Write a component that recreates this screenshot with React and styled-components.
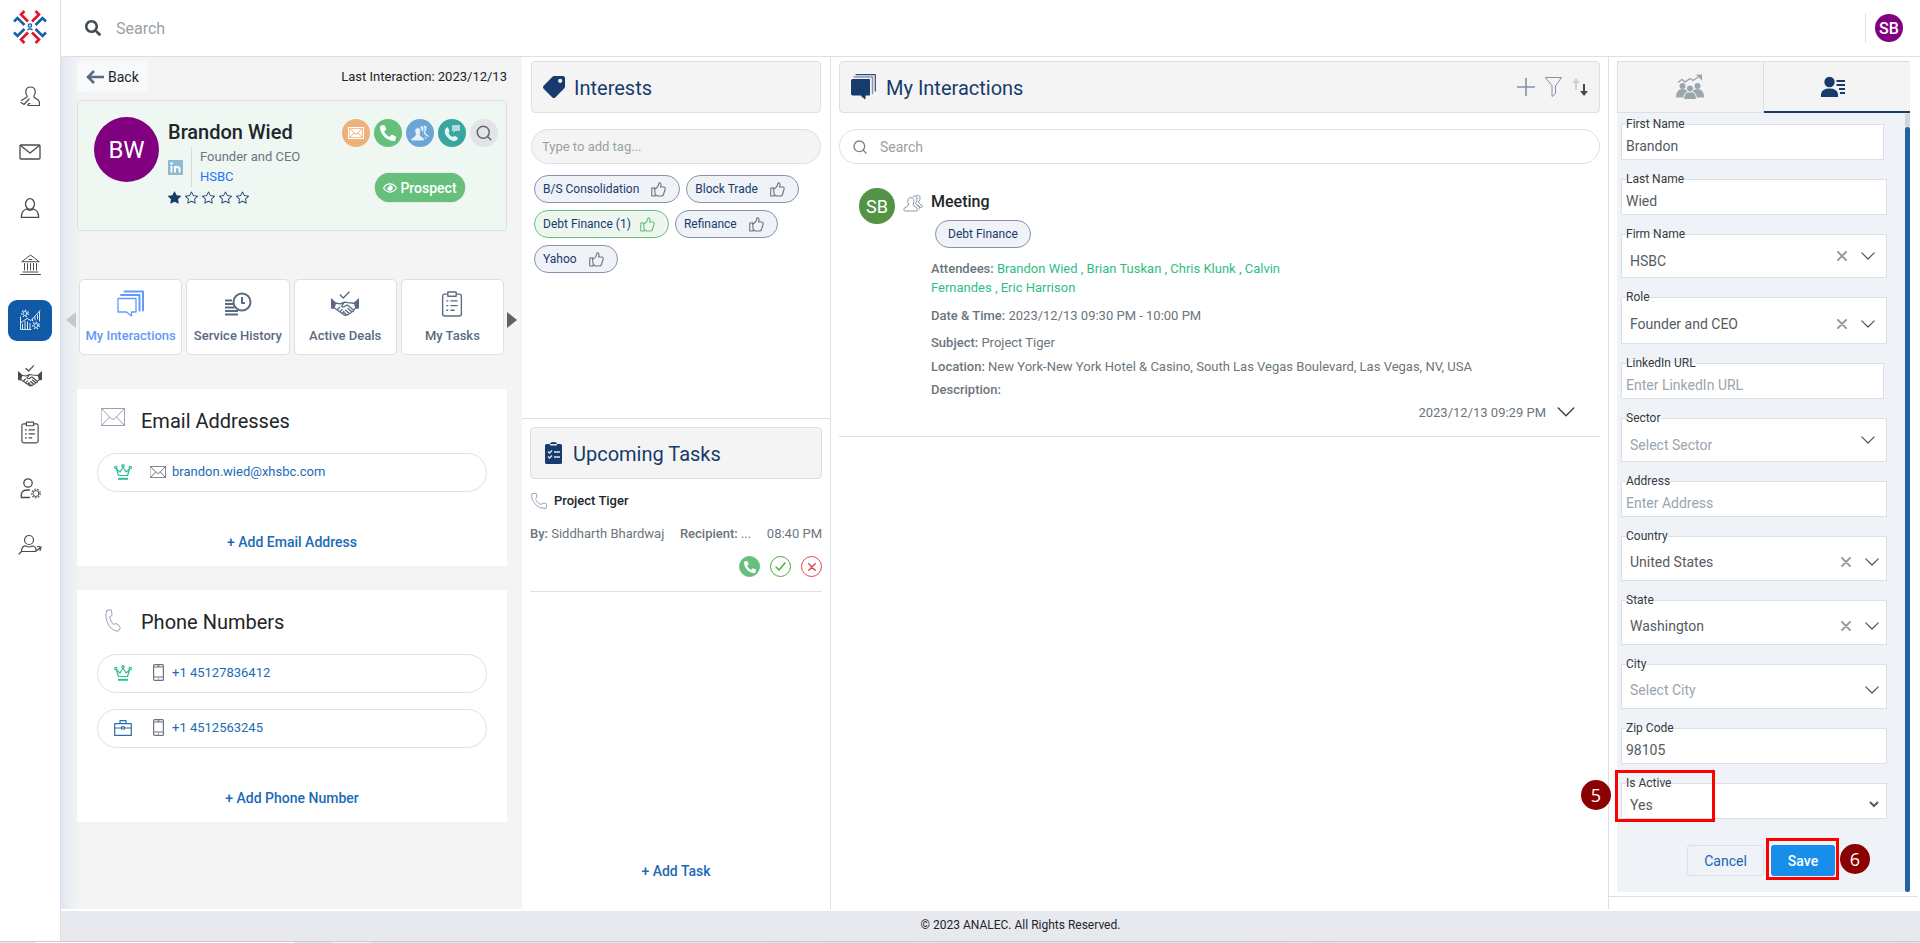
import React from 'react';
import styled, { createGlobalStyle, css } from 'styled-components';
import { FaSearch, FaTag, FaPhoneAlt, FaRegEye } from 'react-icons/fa';
import { BsStar, BsStarFill } from 'react-icons/bs';
import { Search, Phone } from 'lucide-react';

const c = {
  navy: '#173b6c',
  link: '#1b6bb5',
  line: '#dcdfe4',
  panel: '#f4f4f4',
  text: '#212529',
  muted: '#6c757d',
  slate: '#5a6b80',
  green: '#66bf7b',
  purple: '#800080',
  placeholder: '#999fa6',
};

const GlobalStyle = createGlobalStyle`
  * { box-sizing: border-box; }
  body { margin: 0; background: #fff; color: ${c.text}; font-family: Roboto, "Liberation Sans", sans-serif; font-size: 13px; }
  button, input, select { font: inherit; color: inherit; }
  button { cursor: pointer; background: none; border: 0; padding: 0; }
  a { text-decoration: none; color: inherit; }
  h1, h2, h3, p, ul, dl, dd { margin: 0; padding: 0; }
  ul { list-style: none; }
  svg { display: block; flex: none; }
`;

/* ---------- icons ---------- */
const Line = ({ size = 20, w, h, box = '0 0 20 20', sw = 1, children, ...rest }) => (
  <svg width={w || size} height={h || size} viewBox={box} fill="none" stroke="currentColor" strokeWidth={sw}
    strokeLinecap="round" strokeLinejoin="round" aria-hidden="true" {...rest}>{children}</svg>
);

const Logo = () => (
  <svg width="34" height="34" viewBox="0 0 34 34" fill="none" strokeWidth="2.600" strokeLinejoin="miter" aria-label="Analec">
    <g stroke="#e3132c">
      <path d="M11.5 1L8 4.5L15 11.5M22.5 1L26 4.5L19 11.5M11.5 33L8 29.5L15 22.500M22.500 33L26 29.500L19 22.500" />
    </g>
    <g stroke="#1660ac">
      <path d="M1 11.500L4.500 8L11.500 15M33 11.500L29.500 8L22.500 15M1 22.500L4.500 26L11.500 19M33 22.500L29.500 26L22.500 19" />
      <circle cx="17" cy="15.500" r="1.600" strokeWidth="1.400" />
      <path d="M14.500 20Q17 17.500 19.500 20" strokeWidth="1.400" />
    </g>
  </svg>
);
const PersonCheck = () => (
  <Line sw={1.2}><path d="M7 9.500C5 7 5 1 10.500 1S16 7 14 9.500V11.500C17 13 19.500 13.500 19.500 17V19.500H9C6.500 19.500 8 17.500 10 17.500M7 9.500V11L1.500 14.500M9 13L4 18.500L1 16.500" /></Line>
);
const Mail = ({ w = 22, h = 16, sw = 1.3 }) => (
  <Line w={w} h={h} box="0 0 22 16" sw={sw}><rect x="1" y="1" width="20" height="14" rx="1" /><path d="M1.500 1.500L11 9L20.500 1.500" /></Line>
);
const Envelope = ({ w = 24, h = 18, sw = 1 }) => (
  <Line w={w} h={h} box="0 0 24 18" sw={sw}><path d="M.5 .5H23.500V17.500H.5ZM.5 .5L10 10.500Q12 12 14 10.500L23.500 .5M.5 17.500L8.500 9M23.500 17.500L15.500 9" /></Line>
);
const Person = () => (
  <Line sw={1.300}><ellipse cx="10" cy="6" rx="4.500" ry="5.300" /><path d="M6.500 11Q1.500 12.500 1.300 19.300H18.700Q18.500 12.500 13.500 11Q10 13.500 6.500 11" /></Line>
);
const Bank = () => (
  <Line size={21} box="0 0 21 21"><path d="M2 7.500L10.500 1L19 7.500ZM4.500 9.500V16M7.500 9.500V16M10.500 9.500V16M13.500 9.500V16M16.500 9.500V16M3 18H18M.5 20.500H20.500M9 5.500H12" /></Line>
);
const Gear = ({ x, y, r = 2.600 }) => (
  <g><circle cx={x} cy={y} r={r} strokeWidth="1" /><circle cx={x} cy={y} r={r + 1.300} strokeDasharray="1.500 1.500" strokeWidth="1.200" strokeLinecap="butt" /></g>
);
const Analytics = () => (
  <Line size={22} box="0 0 22 22"><path d="M1.500 8V20.500H12M3.500 20V15M6 20V12.500M8.500 20V13M11 20V14.500M13.500 12V10M16 11V8M18.500 10V6M20.500 12V3M1.500 14L8 9.500L12 11.500L21 1.500" /><Gear x={6} y={4.500} r={2} /><Gear x={17} y={16.500} r={2} /></Line>
);
const Deal = ({ size = 24 }) => (
  <Line w={size} h={size * 22 / 24} box="0 0 24 22" sw={1.100}>
    <path d="M8 3.500L10.500 6L15.500 .8" strokeWidth="1.200" />
    <path d="M0 6L4.500 10L3 15.500L0 15Z" fill="currentColor" stroke="none" />
    <path d="M24 6L19.500 10L21 15.500L24 15Z" fill="currentColor" stroke="none" />
    <path d="M4.500 10.500L8 11L11.500 9.500L14.500 10L19.500 10.500M3.500 15L5 16L12 21L14 20.500M11.500 9.500L9 13Q10 14.500 12 13L14 12L19.500 16.500L20.500 15M19.500 16.500Q19.500 18 17.500 17.500L14.500 15M17.500 17.500Q17.500 19.500 15.500 19L12.500 16.500M15.500 19Q15 21 13 20L10.500 18M6 15.500L7.500 14M8 17.500L9.500 15.800M10 19L11 17.500" />
  </Line>
);
const Clipboard = ({ w = 20, h = 23 }) => (
  <Line w={w} h={h} box="0 0 20 25" sw={1.300}>
    <path d="M6 3H3Q1 3 1 5V22Q1 24 3 24H17Q19 24 19 22V5Q19 3 17 3H14M6 1H14V5H6ZM5 9.500H6M9 9.500H15M5 14H6M9 14H15M5 18.500H6M9 18.500H12" />
  </Line>
);
const PersonGear = () => (
  <Line size={21} box="0 0 21 21" sw={1.300}><circle cx="8" cy="5" r="4.200" /><path d="M9.500 19.500H1.200Q.5 12 7 12H9.500" /><Gear x={16} y={15.500} r={3} /></Line>
);
const PersonArrow = () => (
  <Line w={24} h={21} box="0 0 24 21" sw={1.200}><circle cx="11" cy="6" r="4.500" /><path d="M1 20L3.500 17.500H17.500L23 13M19.500 12.500L23 13L22 16.500M3.500 17Q4 11.500 8 12Q11 14 14 12Q18 12 18 16" /></Line>
);
const LinkedIn = () => (
  <svg width="15" height="15" viewBox="0 0 15 15" aria-hidden="true">
    <rect width="15" height="15" fill="#8dbbd6" />
    <circle cx="3.500" cy="3.500" r="1.200" fill="#fff" />
    <path d="M3.500 6V12.500M7 12.500V6M7 9Q7 7 9.300 7T11.600 9.500V12.500" stroke="#fff" strokeWidth="1.900" fill="none" />
  </svg>
);
const Handset = () => (
  <Line w={16} h={23} box="0 0 16 23"><path d="M2 1.500L6 .7Q7 3 7 6.500L4.500 8Q5.500 12.500 8.500 15.500L11 14.500Q14 16 15.300 18.500L13.500 22Q8 22.500 4 16.500Q-1 8 2 1.500Z" /></Line>
);
const Stack = () => (
  <Line size={27} box="0 0 27 27" sw={1.300}>
    <path d="M1 8.500H19V22H14.500V26L9.500 22H1Z" />
    <path d="M4 5H22.500V20.500M7.500 1.500H26V20.500" strokeWidth="2" />
  </Line>
);
const SolidStack = () => (
  <Line w={25} h={26} box="0 0 25 26">
    <path d="M1.500 5.500H18.500V21H14V25L9.500 21H1.500Q.5 21 .5 20V6.500Q.5 5.500 1.500 5.500Z" fill="currentColor" />
    <path d="M3 3H21.500V19.500" strokeWidth="1.500" opacity=".5" /><path d="M5 .6H24.300V17" strokeWidth="1.200" opacity=".9" />
  </Line>
);
const History = () => (
  <Line w={28} h={24} box="0 0 28 24" sw={2} strokeLinecap="butt"><circle cx="18" cy="10" r="8.500" /><path d="M18 5V11H21M1 8.500H8M1 12H9M1 15.500H10.500M1 19H14M1 22.500H14" /></Line>
);
const Crown = () => (
  <Line w={18} h={16} box="0 0 18 16" sw={1.200}><path d="M4.500 11.500L2.500 5L6 8L9 3L12 8L15.500 5L13.500 11.500Z" /><circle cx="1.800" cy="3.500" r="1.200" /><circle cx="9" cy="1.800" r="1.200" /><circle cx="16.200" cy="3.500" r="1.200" /><path d="M4 14.800H14" strokeWidth="2" strokeLinecap="butt" /></Line>
);
const Briefcase = () => (
  <Line w={18} h={16} box="0 0 18 16" sw={1.200}><path d="M.7 3.700H17.300V15.400H.7ZM6 3.500V.7H12V3.500M.7 8H7M11 8H17.300" /><rect x="7.500" y="6.800" width="3" height="2.200" /></Line>
);
const Mobile = () => (
  <Line w={11} h={17} box="0 0 11 17" sw={1.200}><rect x=".6" y=".6" width="9.800" height="15.800" rx="1" /><path d="M1 3H10M1 13H10M5 1.800H6M5.400 14.800H5.600" /></Line>
);
const Thumb = () => (
  <Line size={15} box="0 0 15 15" sw={1.100}><path d="M.8 6L3.500 5.800L4.300 14H1Q.6 14 .7 13ZM4.500 6.800Q7.500 5 8 1Q10.300 .3 10 3.500L9.600 5H13Q14.600 5.300 14 7.500L12.500 12.500Q12 14.200 10 14H6.500L5 13" /></Line>
);
const People = ({ filled }) => (
  <Line w={20} h={18} box="0 0 20 18" sw={1} fill={filled ? 'currentColor' : 'none'} stroke={filled ? '#6aa5d6' : 'currentColor'}>
    <path d="M13 2.500Q15.500 -.5 17 3Q17.500 6 15.500 8Q16 10 19 11.500Q20 13 18 13.500L14.500 11" />
    <path d="M10 2.500Q13 .5 14 4Q14.500 7 12.500 9.500Q13.500 11.500 16.500 13Q17.500 15 16 15.500" />
    <path d="M5.500 10.500Q3 4 8 3.500Q12.500 4 10 10.500Q10.500 12.500 13.500 13.500Q15 15 14 17H1.500Q.5 16.500 1 14.500Q5 13 5.500 10.500Z" />
  </Line>
);
const PhoneChat = () => (
  <svg width="20" height="20" viewBox="0 0 20 20" fill="currentColor" aria-hidden="true">
    <path d="M4 5Q5.500 3.500 6.500 5.500L7.500 8Q7.500 9 6.500 9.500Q7.500 13 11 14Q12 12.500 13 13L15.500 14.500Q16.500 15.500 15 17Q11 20 6 15Q.5 9.500 4 5Z" /><path d="M10 2H18V8H13.500L11.500 10V8H10Z" opacity=".7" />
  </svg>
);
const Chevron = ({ w = 14, h = 8, sw = 1.200 }) => (
  <Line w={w} h={h} box="0 0 14 8" sw={sw}><path d="M.8 .8L7 7L13.200 .8" /></Line>
);
const Cross = ({ size = 10, sw = 2 }) => (
  <Line size={size} box="0 0 10 10" sw={sw}><path d="M1 1L9 9M9 1L1 9" /></Line>
);
const Checklist = () => (
  <svg width="21" height="22" viewBox="-3 0 21 22" aria-hidden="true">
    <path d="M1.500 2H5Q5 0 8.500 0T12 2H15.500Q17 2 17 3.500V20.500Q17 22 15.500 22H1.500Q0 22 0 20.500V3.500Q0 2 1.500 2Z" fill="currentColor" />
    <path d="M5 2.700H12M3 9.500L4.500 11L7 8.500M9 10H15M3 14.500L4.500 16L7 13.500M9 15H15" stroke="#dfe6ef" strokeWidth="1.400" fill="none" />
  </svg>
);
const Sort = () => (
  <svg width="16" height="20" viewBox="0 0 16 20" aria-hidden="true">
    <path d="M4 1L8 6H5V13H3V6H0Z" fill="#cdd1d3" /><path d="M12 19L8 14H11V7H13V14H16Z" fill="#454a52" />
  </svg>
);
const Groups = () => (
  <svg width="28" height="26" viewBox="0 0 28 26" fill="currentColor" aria-hidden="true">
    <path d="M2 8.500L6 5.500L9 8L14 4.500L17 6.500L23 2.500" stroke="currentColor" strokeWidth="1.400" fill="none" /><path d="M20 .5H26V6.500Z" />
    <circle cx="6.500" cy="12" r="3" /><circle cx="21.500" cy="12" r="3" /><path d="M0 23.500Q0 15 6.500 15T13 23.500ZM28 23.500Q28 15 21.500 15T15 23.500Z" />
    <g stroke="#f4f4f4" strokeWidth="1"><path d="M7.500 25.500Q7.500 17.500 14 17.500T20.500 25.500Z" /><circle cx="14" cy="14.500" r="3.600" /></g>
  </svg>
);
const ContactLines = () => (
  <svg width="24" height="22" viewBox="0 0 24 22" fill="currentColor" aria-hidden="true">
    <circle cx="8.500" cy="6" r="5.200" /><path d="M0 21V18Q1 12.500 8.500 12.500T17 18V21ZM15.500 4H24V6H15.500ZM15.500 8H24V10H15.500ZM18 12H24V14H18ZM19 16H24V18H19Z" />
  </svg>
);
const Triangle = ({ left }) => (
  <svg width="10" height="16" viewBox="0 0 10 16" fill="currentColor" aria-hidden="true"><path d={left ? 'M10 0V16L0 8Z' : 'M0 0V16L10 8Z'} /></svg>
);

/* ---------- page frame ---------- */
const Page = styled.div`
  display: grid; grid-template-columns: 61px minmax(0, 1fr); grid-template-rows: 1fr auto; min-height: 100vh;
`;
const Sidebar = styled.nav`
  display: flex; flex-direction: column; align-items: center; padding-top: 10px; color: #4b4b4b;
  border-right: 1px solid ${c.line};
`;
const NavList = styled.ul`
  display: grid; gap: 15px; margin-top: 32px; width: 100%; justify-items: center;
`;
const NavLink = styled.a`
  display: flex; width: 44px; height: 41px; padding-bottom: 1px; align-items: center; justify-content: center; border-radius: 9px;
  ${({ $active }) => $active && css`background: #115aa8; color: #dbe8f5;`}
`;
const Main = styled.div`
  display: flex; flex-direction: column; min-width: 0;
`;
const TopBar = styled.header`
  display: flex; align-items: center; height: 57px; padding: 0 17px 0 24px; border-bottom: 1px solid ${c.line};
`;
const TopSearch = styled.label`
  display: flex; flex: 1; align-items: center; gap: 15px; color: #444b53;
  input { flex: 1; border: 0; outline: 0; padding: 0; font-size: 16px; }
  input::placeholder { color: ${c.placeholder}; opacity: 1; }
`;
const Account = styled.div`
  display: flex; align-items: center; height: 30px; padding-left: 9px; border-left: 1px solid ${c.line};
`;
const Avatar = styled.span`
  display: flex; flex: none; align-items: center; justify-content: center; border-radius: 50%;
  width: ${({ $size }) => $size}px; height: ${({ $size }) => $size}px; font-size: ${({ $font }) => $font}px;
  font-weight: ${({ $weight }) => $weight || 400}; background: ${({ $bg }) => $bg || c.purple}; color: #fff;
`;
const Columns = styled.main`
  flex: 1; display: grid; grid-template-columns: minmax(0, 461fr) minmax(0, 309fr) minmax(0, 778fr) minmax(0, 311fr);
`;
const Footer = styled.footer`
  height: 30px; margin-top: 2px; padding: 0 0 2px 60px; display: flex; align-items: center; justify-content: center;
  background: #e8e9ee; font-size: 12px;
`;
const Strip = styled.div`
  grid-column: 1 / -1; height: 2px; border-top: 1px solid #c9ccd0;
  background: linear-gradient(90deg, #dfe6f0 0 36px, #fff 36px 294px, #cbeeee 294px 332px, #eef8f8 332px 370px, #cbeeee 370px, #dfe0ea 60%, #e9e2e4 85%, #dde3ea);
`;

/* ---------- contact column ---------- */
const ContactColumn = styled.section`
  background: linear-gradient(90deg, #e1e8f0 0, #ebedf2 8px, ${c.panel} 20px); padding-top: 4px;
`;
const Inset = styled.div`
  margin: 0 15px 0 16px;
`;
const BackRow = styled(Inset)`
  display: flex; align-items: center; justify-content: space-between; height: 31px;
`;
const BackButton = styled.button`
  display: flex; align-items: center; gap: 4px; height: 31px; padding: 0 9px; border-radius: 4px; background: #f8f9fa; font-size: 14px;
  svg { color: ${c.slate}; }
`;
const ProfileCard = styled(Inset)`
  display: flex; gap: 9px; margin-top: 8px; height: 131px; padding: 16px 8px 0 16px;
  border: 1px solid ${c.line}; border-radius: 4px; background: #eef7f2;
`;
const ProfileInfo = styled.div`
  flex: 1; min-width: 0; padding-top: 3px;
`;
const Name = styled.h1`
  font-size: 20px; font-weight: 500; line-height: 24px; white-space: nowrap;
`;
const RoleRow = styled.div`
  display: flex; align-items: center; gap: 8px; margin-top: 3px;
`;
const RoleText = styled.div`
  border-left: 1px solid #d3dbdb; padding-left: 8px; line-height: 20px; color: ${c.muted}; white-space: nowrap;
  a { display: block; color: #1f75fe; }
`;
const Stars = styled.div`
  display: flex; align-items: center; gap: 4px; height: 20px; color: ${c.navy};
`;
const ProfileSide = styled.div`
  display: flex; flex-direction: column; align-items: center; gap: 26px; padding-top: 2px;
`;
const Actions = styled.div`
  display: flex; gap: 4px;
`;
const RoundAction = styled.button`
  display: flex; align-items: center; justify-content: center; width: 28px; height: 28px; border-radius: 50%;
  background: ${({ $bg }) => $bg}; color: ${({ $fg }) => $fg || '#fff'};
`;
const MailTile = styled.span`
  padding: 1px; background: #fff; color: #efb17a;
`;
const Prospect = styled.button`
  display: flex; align-items: center; gap: 3px; height: 29px; padding: 0 8px; border-radius: 15px;
  background: ${c.green}; color: #fff; font-size: 14px; font-weight: 500; box-shadow: 0 0 1px #7d9886;
`;
const TabStrip = styled.div`
  display: flex; align-items: center; gap: 3px; margin-top: 48px; padding: 0 5px;
`;
const ArrowButton = styled.button`
  margin-top: 6px; color: ${({ $off }) => ($off ? '#c6c7c9' : '#5f6163')};
`;
const Tabs = styled.div`
  flex: 1; display: grid; grid-template-columns: repeat(4, minmax(0, 1fr)); gap: 4px;
`;
const TabCard = styled.button`
  display: grid; grid-template-rows: 47px 16px; align-content: start; justify-items: center; justify-content: center; align-items: center; height: 76px;
  border: 1px solid ${c.line}; border-radius: 5px; background: #fff;
  color: ${({ $active }) => ($active ? '#6499f8' : c.slate)}; font-weight: 500; white-space: nowrap;
`;
const InfoBlock = styled(Inset)`
  margin-top: ${({ $gap }) => $gap}px; padding: 16px 20px 12px; background: #fff;
  display: flex; flex-direction: column; gap: 16px;
`;
const InfoTitle = styled.h2`
  display: flex; align-items: center; gap: 16px; height: 32px; padding-left: 4px; font-size: 20px; font-weight: 400;
  span { display: flex; justify-content: center; width: 24px; height: 26px; align-items: flex-start; color: #98a1b3; }
`;
const InfoPill = styled.div`
  display: grid; grid-template-columns: 18px 28px 1fr; align-items: center; column-gap: 6px; height: 39px; padding: 0 16px 2px;
  border: 1px solid ${c.line}; border-radius: 20px; color: ${({ $tone }) => $tone};
  svg:nth-child(2) { justify-self: center; margin-left: 12px; color: ${c.muted}; }
  a { color: ${c.link}; }
`;
const AddButton = styled.button`
  align-self: center; height: 24px; color: ${c.link}; font-size: 14px; font-weight: 500;
  margin-top: ${({ $gap }) => $gap || 0}px;
`;

/* ---------- shared parts ---------- */
const PanelHeader = styled.header`
  display: flex; align-items: center; height: 52px; padding: 0 11px; border: 1px solid ${c.line}; border-radius: 4px;
  background: ${c.panel}; color: ${c.navy};
  h2 { margin-left: ${({ $gap }) => $gap}px; padding-top: 2px; font-size: 20px; font-weight: 400; }
`;
const Tag = styled.span`
  display: inline-flex; align-items: center; gap: ${({ $tight }) => ($tight ? 9 : 12)}px; height: 28px;
  padding: ${({ $plain }) => ($plain ? '0 12px' : '0 13px 0 8px')};
  border: 1px solid ${({ $green }) => ($green ? c.green : '#8791ab')}; border-radius: 14px;
  background: ${({ $green }) => ($green ? '#edf7f0' : '#eff2f6')}; color: ${c.navy}; font-size: 12px; white-space: nowrap;
  button { color: ${({ $green }) => ($green ? c.green : c.muted)}; }
`;

/* ---------- interests and tasks ---------- */
const SideColumn = styled.section`
  display: flex; flex-direction: column; border-right: 1px solid ${c.line};
`;
const Interests = styled.div`
  min-height: 362px; padding: 4px 9px; border-bottom: 1px solid ${c.line};
`;
const TagInput = styled.input`
  display: block; width: 100%; height: 35px; margin-top: 16px; padding: 0 10px; border: 1px solid ${c.line};
  border-radius: 18px; background: ${c.panel}; outline: 0;
  &::placeholder { color: ${c.placeholder}; opacity: 1; }
`;
const TagList = styled.ul`
  display: flex; flex-wrap: wrap; gap: 7px 6px; margin-top: 11px; padding: 0 3px;
  li { display: flex; }
`;
const Tasks = styled.div`
  flex: 1; display: flex; flex-direction: column; padding: 8px 8px 26px;
`;
const Task = styled.article`
  flex: none; margin: 5px 0 auto; padding-bottom: 8px; border-bottom: 1px solid ${c.line}; color: ${c.muted};
`;
const TaskLine = styled.div`
  display: flex; align-items: center; height: 33px; white-space: nowrap; gap: ${({ $gap }) => $gap || 0}px;
  justify-content: ${({ $justify }) => $justify || 'flex-start'};
  h3 { font-size: 13px; font-weight: 500; color: ${c.text}; }
  b { font-weight: 500; }
  svg { color: #98a1b3; }
  button svg { color: inherit; }
`;
const TaskAction = styled.button`
  display: flex; align-items: center; justify-content: center; width: 21px; height: 21px; border-radius: 50%;
  border: 1px solid ${({ $tone }) => $tone}; color: ${({ $tone, $fill }) => ($fill ? '#fff' : $tone)};
  background: ${({ $tone, $fill }) => ($fill ? $tone : '#fff')};
`;

/* ---------- interactions ---------- */
const Feed = styled.section`
  padding: 4px 8px 0; border-right: 1px solid ${c.line};
`;
const HeaderTools = styled.div`
  display: flex; align-items: center; gap: 10px; margin-left: auto; color: #8490a8;
`;
const FeedSearch = styled.label`
  display: flex; align-items: center; gap: 12px; height: 35px; margin-top: 16px; padding: 0 12px;
  border: 1px solid ${c.line}; border-radius: 18px; color: #7a8086;
  input { flex: 1; border: 0; outline: 0; padding: 0; font-size: 14px; }
  input::placeholder { color: ${c.placeholder}; opacity: 1; }
`;
const Entry = styled.article`
  display: grid; grid-template-columns: 36px 20px minmax(0, 1fr); column-gap: 8px; padding: 24px 20px 14px;
  border-bottom: 1px solid ${c.line}; color: ${c.muted};
`;
const EntryIcon = styled.span`
  padding-top: 6px; color: #8c96aa;
`;
const EntryBody = styled.div`
  padding-top: 2px;
  h3 { font-size: 16px; font-weight: 500; line-height: 24px; color: ${c.text}; margin-bottom: 6px; }
  ${Tag} { margin-left: 4px; }
`;
const Detail = styled.p`
  margin-top: ${({ $gap }) => $gap}px; line-height: 19px; max-width: ${({ $narrow }) => ($narrow ? '355px' : 'none')};
  b { font-weight: 500; }
  span { color: #2fbd85; }
`;
const EntryFoot = styled.div`
  grid-column: 1 / -1; display: flex; align-items: center; justify-content: flex-end; gap: 11px; height: 20px;
  margin-top: 3px; padding-right: 5px;
  button { color: #444; }
`;

/* ---------- edit form ---------- */
const FormColumn = styled.section`
  padding: 4px 2px 12px 0;
`;
const FormBox = styled.div`
  padding: 0 8px 4px; border-bottom: 1px solid ${c.line};
`;
const FormTabs = styled.div`
  display: grid; grid-template-columns: 1fr 1fr;
`;
const FormTab = styled.button`
  display: flex; align-items: center; justify-content: center; height: 52px; border: 1px solid ${c.line};
  background: ${c.panel}; color: #9ba6ad;
  ${({ $active }) => $active && css`
    padding-right: 8px; border-left: 0; border-right: 0; border-bottom: 2px solid ${c.navy}; color: ${c.navy};
  `}
`;
const Scroller = styled.div`
  display: flex; background: #eff3f7;
`;
const Track = styled.div`
  width: 5px; padding-top: 14px; border-radius: 3px; background: #ced6de;
  &::after { content: ''; display: block; height: 100%; border-radius: 3px; background: #2263a0; }
`;
const Form = styled.form`
  flex: 1; min-width: 0; display: flex; flex-direction: column; gap: 12px; padding: 4px 18px 16px 4px;
`;
const Field = styled.fieldset`
  min-width: 0; margin: 0 ${({ $inset }) => ($inset ? 3 : 0)}px 0 0;
  padding: 0 4px; border: 1px solid ${c.line}; background: #fff; color: #545b62; font-size: 14px;
  legend { padding: 0; font-size: 12px; line-height: 14px; color: #343a40; }
`;
const TextInput = styled.input`
  display: block; width: 100%; height: 28px; border: 0; outline: 0; padding: 2px 0 0; background: transparent;
  &::placeholder { color: #9aa5ad; opacity: 1; }
`;
const NativeSelect = styled.select`
  display: block; width: 100%; height: 28px; border: 0; outline: 0; padding: 2px 0 0; background: transparent;
`;
const PickerRow = styled.div`
  display: flex; height: ${({ $h }) => $h}px; align-items: center; gap: 14px; padding: 0 ${({ $wide }) => ($wide ? 7 : 3)}px 0 4px;
  select { flex: 1; min-width: 0; height: 100%; appearance: none; border: 0; outline: 0; padding: ${({ $raised }) => ($raised ? 4 : 0)}px 0 0; background: transparent;
    color: ${({ $empty }) => ($empty ? '#9aa5ad' : 'inherit')}; }
  button { color: #9d9d9d; }
  > svg, button { margin-bottom: ${({ $raised }) => ($raised ? 6 : 0)}px; }
  > svg { color: #555; }
`;
const FormButtons = styled.div`
  display: flex; justify-content: flex-end; gap: 7px; margin: 14px 52px 0 0;
`;
const FormButton = styled.button`
  height: 31px; border-radius: 3px; font-size: 14px; width: ${({ $w }) => $w}px;
  ${({ $primary }) => ($primary
    ? css`background: #168eea; color: #fff; font-weight: 500;`
    : css`border: 1px solid ${c.line}; color: #1b62b5;`)}
`;
const Marked = styled.div`
  position: relative;
`;
const Frame = styled.span`
  position: absolute; border: 3px solid #f00; pointer-events: none;
  inset: ${({ $inset }) => $inset}; width: ${({ $w }) => $w || 'auto'};
`;
const Step = styled.span`
  position: absolute; top: ${({ $top }) => $top}px; left: ${({ $left }) => $left}px; display: flex; align-items: center; justify-content: center;
  width: 30px; height: 30px; border-radius: 50%; background: #8b0000; color: #fff; font-family: "Open Sans", sans-serif; font-size: 18px;
`;

const navItems = [
  ['Clients', <PersonCheck />], ['Mail', <Mail />], ['Contacts', <Person />], ['Firms', <Bank />],
  ['Analytics', <Analytics />, true], ['Deals', <Deal />], ['Tasks', <Clipboard w={18} />],
  ['User settings', <PersonGear />], ['Referrals', <PersonArrow />],
];
const interests = [['B/S Consolidation'], ['Block Trade'], ['Debt Finance (1)', true], ['Refinance'], ['Yahoo']];

function InputField({ id, label, value, placeholder, inset }) {
  return (
    <Field $inset={inset}>
      <legend><label htmlFor={id}>{label}</label></legend>
      <TextInput id={id} defaultValue={value} placeholder={placeholder} />
    </Field>
  );
}

function PickerField({ id, label, value, placeholder, h = 37, raised, wide }) {
  return (
    <Field>
      <legend><label htmlFor={id}>{label}</label></legend>
      <PickerRow $h={h} $raised={raised} $wide={wide} $empty={!value}>
        <select id={id}><option>{value || placeholder}</option></select>
        {value && <button type="button" aria-label={`Clear ${label}`}><Cross /></button>}
        <Chevron />
      </PickerRow>
    </Field>
  );
}

export default function App() {
  return (
    <>
      <GlobalStyle />
      <Page>
        <Sidebar>
          <Logo />
          <NavList>
            {navItems.map(([label, icon, active]) => (
              <li key={label}><NavLink href="#" aria-label={label} $active={active}>{icon}</NavLink></li>
            ))}
          </NavList>
        </Sidebar>
        <Main>
          <TopBar>
            <TopSearch><FaSearch size={16} /><input placeholder="Search" aria-label="Search everything" /></TopSearch>
            <Account><Avatar $size={28} $font={16} $weight={500}>SB</Avatar></Account>
          </TopBar>
          <Columns>
            <ContactColumn>
              <BackRow>
                <BackButton type="button">
                  <Line w={18} h={14} box="0 0 18 14" sw={2.500} strokeLinecap="butt" strokeLinejoin="miter"><path d="M18 7H2M8 1L2 7L8 13" /></Line>
                  Back
                </BackButton>
                <span>Last Interaction: 2023/12/13</span>
              </BackRow>
              <ProfileCard>
                <Avatar $size={65} $font={24}>BW</Avatar>
                <ProfileInfo>
                  <Name>Brandon Wied</Name>
                  <RoleRow>
                    <LinkedIn />
                    <RoleText>Founder and CEO<a href="#">HSBC</a></RoleText>
                  </RoleRow>
                  <Stars>
                    <BsStarFill size={13} /><BsStar size={13} /><BsStar size={13} /><BsStar size={13} /><BsStar size={13} />
                  </Stars>
                </ProfileInfo>
                <ProfileSide>
                  <Actions>
                    <RoundAction type="button" aria-label="Email" $bg="#efb17a"><MailTile><Envelope w={14} h={10} sw={1.800} /></MailTile></RoundAction>
                    <RoundAction type="button" aria-label="Call" $bg={c.green}><FaPhoneAlt size={16} /></RoundAction>
                    <RoundAction type="button" aria-label="Meeting" $bg="#6aa5d6" $fg="#e6f0f9"><People filled /></RoundAction>
                    <RoundAction type="button" aria-label="Call note" $bg="#3aa5a0" $fg="#e2f5f3"><PhoneChat /></RoundAction>
                    <RoundAction type="button" aria-label="Find" $bg="#e2e4e9" $fg="#666"><Search size={18} strokeWidth={2} /></RoundAction>
                  </Actions>
                  <Prospect type="button"><FaRegEye size={14} />Prospect</Prospect>
                </ProfileSide>
              </ProfileCard>
              <TabStrip>
                <ArrowButton type="button" aria-label="Previous" $off><Triangle left /></ArrowButton>
                <Tabs>
                  <TabCard type="button" $active><Stack />My Interactions</TabCard>
                  <TabCard type="button"><History />Service History</TabCard>
                  <TabCard type="button"><Deal size={28} />Active Deals</TabCard>
                  <TabCard type="button"><Clipboard w={22} h={26} />My Tasks</TabCard>
                </Tabs>
                <ArrowButton type="button" aria-label="Next"><Triangle /></ArrowButton>
              </TabStrip>
              <InfoBlock $gap={34}>
                <InfoTitle><span><Envelope /></span>Email Addresses</InfoTitle>
                <InfoPill $tone="#2fbd95"><Crown /><Envelope w={16} h={12} sw={1.500} /><a href="#">brandon.wied@xhsbc.com</a></InfoPill>
                <AddButton type="button" $gap={22}>+ Add Email Address</AddButton>
              </InfoBlock>
              <InfoBlock $gap={24}>
                <InfoTitle><span><Handset /></span>Phone Numbers</InfoTitle>
                <InfoPill $tone="#2fbd95"><Crown /><Mobile /><a href="#">+1 45127836412</a></InfoPill>
                <InfoPill $tone="#2d6bab"><Briefcase /><Mobile /><a href="#">+1 4512563245</a></InfoPill>
                <AddButton type="button" $gap={22}>+ Add Phone Number</AddButton>
              </InfoBlock>
            </ContactColumn>

            <SideColumn>
              <Interests>
                <PanelHeader $gap={9}><FaTag size={22} style={{ transform: 'scaleX(-1)' }} /><h2>Interests</h2></PanelHeader>
                <TagInput placeholder="Type to add tag..." aria-label="Add tag" />
                <TagList>
                  {interests.map(([name, green]) => (
                    <li key={name}><Tag $green={green} $tight={green}>{name}<button type="button" aria-label={`Like ${name}`}><Thumb /></button></Tag></li>
                  ))}
                </TagList>
              </Interests>
              <Tasks>
                <PanelHeader $gap={10}><Checklist /><h2>Upcoming Tasks</h2></PanelHeader>
                <Task>
                  <TaskLine $gap={6}><Phone size={18} strokeWidth={1.300} /><h3>Project Tiger</h3></TaskLine>
                  <TaskLine $justify="space-between"><span><b>By:</b> Siddharth Bhardwaj</span><span><b>Recipient:</b> ...</span><span>08:40 PM</span></TaskLine>
                  <TaskLine $justify="flex-end" $gap={10}>
                    <TaskAction type="button" aria-label="Call" $tone={c.green} $fill><FaPhoneAlt size={12} /></TaskAction>
                    <TaskAction type="button" aria-label="Complete" $tone="#45ac34"><Line w={11} h={9} box="0 0 11 9" sw={1.400}><path d="M1 5L4 8L10 1" /></Line></TaskAction>
                    <TaskAction type="button" aria-label="Dismiss" $tone="#dc4450"><Cross size={8} sw={1.800} /></TaskAction>
                  </TaskLine>
                </Task>
                <AddButton type="button">+ Add Task</AddButton>
              </Tasks>
            </SideColumn>

            <Feed>
              <PanelHeader $gap={10}>
                <SolidStack /><h2>My Interactions</h2>
                <HeaderTools>
                  <button type="button" aria-label="Add"><Line size={18} box="0 0 18 18" sw={1.600} strokeLinecap="butt"><path d="M9 0V18M0 9H18" /></Line></button>
                  <button type="button" aria-label="Filter"><Line w={17} h={20} box="0 0 17 20"><path d="M.5 .5H16.500L10.500 9V16.500L7 19.500V9Z" /></Line></button>
                  <button type="button" aria-label="Sort"><Sort /></button>
                </HeaderTools>
              </PanelHeader>
              <FeedSearch><Search size={16} strokeWidth={2} /><input placeholder="Search" aria-label="Search interactions" /></FeedSearch>
              <Entry>
                <Avatar $size={36} $font={18} $bg="#549345">SB</Avatar>
                <EntryIcon><People /></EntryIcon>
                <EntryBody>
                  <h3>Meeting</h3>
                  <Tag $plain>Debt Finance</Tag>
                  <Detail $gap={11} $narrow><b>Attendees:</b> <span>Brandon Wied , Brian Tuskan , Chris Klunk , Calvin Fernandes , Eric Harrison</span></Detail>
                  <Detail $gap={9}><b>Date &amp; Time:</b> 2023/12/13 09:30 PM - 10:00 PM</Detail>
                  <Detail $gap={8}><b>Subject:</b> Project Tiger</Detail>
                  <Detail $gap={5}><b>Location:</b> New York-New York Hotel &amp; Casino, South Las Vegas Boulevard, Las Vegas, NV, USA</Detail>
                  <Detail $gap={4}><b>Description:</b></Detail>
                </EntryBody>
                <EntryFoot>2023/12/13 09:29 PM<button type="button" aria-label="Expand"><Chevron w={18} h={10} /></button></EntryFoot>
              </Entry>
            </Feed>

            <FormColumn>
              <FormBox>
                <FormTabs>
                  <FormTab type="button" aria-label="Insights"><Groups /></FormTab>
                  <FormTab type="button" aria-label="Contact details" $active><ContactLines /></FormTab>
                </FormTabs>
                <Scroller>
                  <Form onSubmit={(e) => e.preventDefault()}>
                    <InputField id="first" label="First Name" value="Brandon" inset />
                    <InputField id="last" label="Last Name" value="Wied" />
                    <PickerField id="firm" label="Firm Name" value="HSBC" h={36} raised wide />
                    <PickerField id="role" label="Role" value="Founder and CEO" h={39} wide />
                    <InputField id="linkedin" label="LinkedIn URL" placeholder="Enter LinkedIn URL" inset />
                    <PickerField id="sector" label="Sector" placeholder="Select Sector" h={36} raised wide />
                    <InputField id="address" label="Address" placeholder="Enter Address" />
                    <PickerField id="country" label="Country" value="United States" />
                    <PickerField id="state" label="State" value="Washington" />
                    <PickerField id="city" label="City" placeholder="Select City" />
                    <InputField id="zip" label="Zip Code" value="98105" />
                    <Marked>
                      <Field>
                        <legend><label htmlFor="active">Is Active</label></legend>
                        <NativeSelect id="active"><option>Yes</option><option>No</option></NativeSelect>
                      </Field>
                      <Frame $inset="-6px auto -3px -6px" $w="100px" />
                      <Step $top={4} $left={-40}>5</Step>
                    </Marked>
                    <FormButtons>
                      <FormButton type="button" $w={77}>Cancel</FormButton>
                      <Marked>
                        <FormButton type="submit" $primary $w={64}>Save</FormButton>
                        <Frame $inset="-7px -4px -4px -5px" />
                        <Step $top={-1} $left={69}>6</Step>
                      </Marked>
                    </FormButtons>
                  </Form>
                  <Track />
                </Scroller>
              </FormBox>
            </FormColumn>
          </Columns>
          <Footer>© 2023 ANALEC. All Rights Reserved.</Footer>
        </Main>
        <Strip />
      </Page>
    </>
  );
}
